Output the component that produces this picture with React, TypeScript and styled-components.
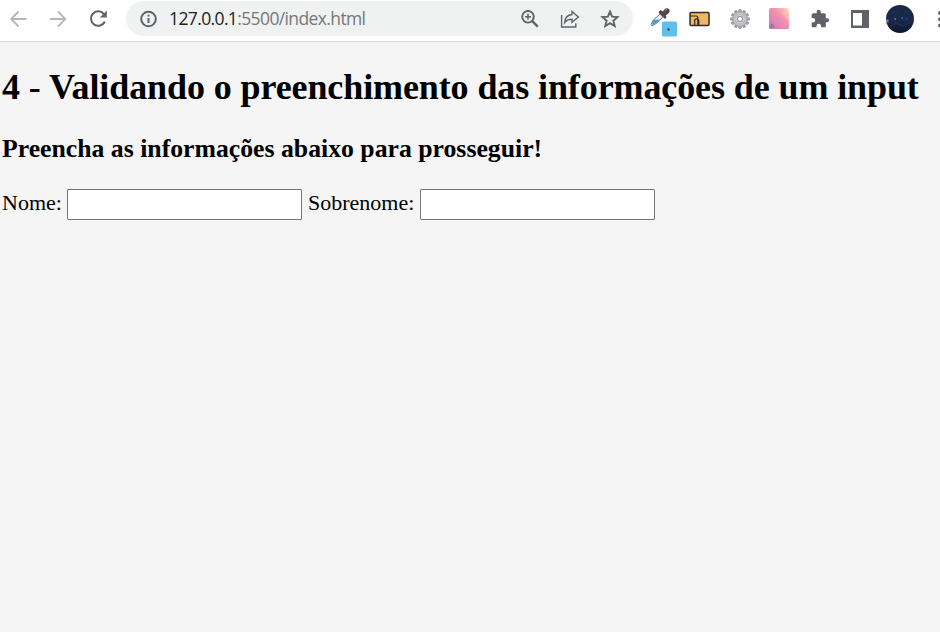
import React from "react";
import styled, { createGlobalStyle } from "styled-components";

const GlobalStyle = createGlobalStyle`
  * { box-sizing: border-box; }
  html, body, #root { height: 100%; }
  body { margin: 0; overflow: hidden; background: #f5f5f5; }
  svg { display: block; flex: none; overflow: visible; }
`;

const Window = styled.div`
  display: flex;
  flex-direction: column;
  width: 940px;
  height: 632px;
  overflow: hidden;
`;

const Toolbar = styled.header`
  display: flex;
  align-items: flex-start;
  flex: none;
  height: 42px;
  padding-top: 1px;
  background: #fff;
  border-bottom: 1px solid #dadbdc;
`;

const IconButton = styled.button<{ $width?: number; $color?: string }>`
  display: flex;
  align-items: center;
  justify-content: center;
  flex: none;
  width: ${(p) => p.$width ?? 40}px;
  height: 35px;
  padding: 0;
  border: 0;
  background: none;
  color: ${(p) => p.$color ?? "#5f6368"};
`;

const Navigation = styled.nav`
  display: flex;
  flex: none;
  width: 120px;
  margin-left: -2px;
  margin-right: 8px;
`;

const AddressBar = styled.div`
  display: flex;
  align-items: center;
  flex: none;
  width: 507px;
  height: 35px;
  padding: 0 3px 0 12px;
  border-radius: 18px;
  background: #f0f2f2;
  color: #5f6368;
`;

const Address = styled.span`
  flex: 1;
  margin-left: 11px;
  padding-bottom: 1px;
  font: 400 17.5px/24px "Open Sans", "Noto Sans", sans-serif;
  letter-spacing: -0.62px;
  color: #74777a;
  white-space: nowrap;
`;

const Host = styled.span`
  color: #202124;
`;

const Extensions = styled.div`
  display: flex;
  flex: none;
  margin-left: 7px;
`;

const Page = styled.main`
  flex: 1;
  padding: 0 2px;
  background: #f5f5f5;
  color: #000;
  font: 22px/25px "Liberation Serif", "Times New Roman", serif;
`;

const Title = styled.h1`
  margin: 25px 0 0;
  font-size: 36px;
  line-height: 41px;
  letter-spacing: -0.1px;
  white-space: nowrap;
`;

const Subtitle = styled.h3`
  margin: 26px 0 0;
  font-size: 25.74px;
  line-height: 29px;
  white-space: nowrap;
`;

const Form = styled.form`
  display: flex;
  margin-top: 26px;
`;

const Label = styled.label<{ $width: number }>`
  flex: none;
  width: ${(p) => p.$width}px;
  padding-top: 1px;
  white-space: nowrap;
`;

const TextInput = styled.input`
  width: 235px;
  height: 31px;
  margin: 0 6px 0 0;
  padding: 1px 3px;
  border: 1px solid #767676;
  border-radius: 1px;
  background: #fff;
  font: 18px "Liberation Sans", Arial, sans-serif;
`;

const ArrowIcon = ({ forward = false }: { forward?: boolean }) => (
  <svg width="18" height="18" viewBox="0 0 18 18" fill="none" stroke="currentColor" strokeWidth="1.8">
    <path d={forward ? "M1 9H16M9 1.5L16.3 9L9 16.5" : "M17.5 9H2.5M9.5 1.5L2.2 9L9.5 16.5"} />
  </svg>
);

const ReloadIcon = () => (
  <svg width="20" height="20" viewBox="0 0 20 20">
    <path d="M16.8 12.5A7.2 7.2 0 1 1 15.8 5" fill="none" stroke="currentColor" strokeWidth="2" />
    <path d="M18.8 1.5V8.5H11.8Z" fill="currentColor" />
  </svg>
);

const InfoIcon = () => (
  <svg width="20" height="20" viewBox="0 0 20 20">
    <circle cx="10.5" cy="10" r="7.3" fill="none" stroke="currentColor" strokeWidth="2" />
    <path d="M9.5 9H11.5V14H9.5ZM9.5 5.8H11.5V7.6H9.5Z" fill="currentColor" />
  </svg>
);

const ZoomIcon = () => (
  <svg width="20" height="20" viewBox="0 0 20 20" fill="none" stroke="currentColor">
    <circle cx="8" cy="7.8" r="5.8" strokeWidth="1.9" />
    <path d="M8 4.8V10.8M5 7.8H11" strokeWidth="1.6" />
    <path d="M12.3 12.1L17.8 17.6" strokeWidth="2.4" />
  </svg>
);

const ShareIcon = () => (
  <svg width="20" height="20" viewBox="0 0 20 20" fill="none" stroke="currentColor" strokeWidth="1.4">
    <path d="M1.6 6V18H15.8V14.3" />
    <path d="M12 2.5L18.4 8L12 13.3V10.3C8.3 10.2 6.3 11.2 4.7 13.5C5 8.9 7.7 5.9 12 5.5Z" />
  </svg>
);

const StarIcon = () => (
  <svg width="20" height="20" viewBox="0 0 20 20" fill="none" stroke="currentColor" strokeWidth="1.9">
    <path d="M10 2.7L12.1 7.7L17.5 8.1L13.4 11.7L14.7 17L10 14.2L5.3 17L6.6 11.7L2.5 8.1L7.9 7.7Z" />
  </svg>
);

const EyedropperIcon = () => (
  <svg width="30" height="30" viewBox="0 0 30 30">
    <path d="M6 20.5L8.3 16L16 9L19 12L11.5 19.3L7 21.8Z" fill="#dceaf4" stroke="#77757b" />
    <path d="M6.8 21L8.8 15.7H14.8L11.2 19Z" fill="#38a0e0" />
    <path d="M14.2 7.2L15.5 6L17.8 7.6L20 4.8Q22.5 3.6 24.3 5.2Q25.4 7.2 23.8 9.2L20.7 11.4L21.6 13L20 15L13.5 8.7Z" fill="#544549" />
    <path d="M20 6.5L22.2 5.3" stroke="#9a8d91" />
    <rect x="17" y="17.5" width="15" height="15" rx="1.5" fill="#5fbfeb" />
    <rect x="22.5" y="24.5" width="2" height="2" fill="#163445" />
  </svg>
);

const FolderIcon = () => (
  <svg width="22" height="16" viewBox="0 0 22 16">
    <rect x="1" y="1.5" width="19" height="13" rx="1" fill="#ebb95f" stroke="#3b2635" strokeWidth="1.5" />
    <path d="M1 5H7Q8.8 5 8.8 7V14.5M5.7 14.5V10Q5.7 7.8 7.5 7.8Q9.8 7.8 9.8 10V14.5" fill="none" stroke="#3b2635" strokeWidth="1.2" />
  </svg>
);

const gearTeeth = Array.from({ length: 12 }, (_, i) => i * 30);

const GearIcon = () => (
  <svg width="20" height="20" viewBox="0 0 20 20">
    {gearTeeth.map((angle) => (
      <rect key={angle} x="8.7" y="0.5" width="2.6" height="4" rx=".6" fill="#a5a5aa" stroke="#7c7c82" strokeWidth=".5" transform={`rotate(${angle} 10 10)`} />
    ))}
    <circle cx="10" cy="10" r="7.3" fill="#c4c4c8" stroke="#919196" strokeWidth=".7" />
    <circle cx="10" cy="10" r="5" fill="#cdcdd0" stroke="#b6b6ba" strokeWidth=".8" />
    <path d="M6.4 6.4L13.6 13.6M13.6 6.4L6.4 13.6" stroke="#a6a6aa" strokeWidth=".8" />
    <circle cx="10" cy="10" r="2.5" fill="#fff" stroke="#8a8a8f" strokeWidth="1" />
  </svg>
);

const GradientIcon = () => (
  <svg width="20" height="21" viewBox="0 0 20 21">
    <defs>
      <linearGradient id="tile" x1="0" y1="1" x2="1" y2="0">
        <stop offset="0" stopColor="#bf78b5" />
        <stop offset=".3" stopColor="#dc82b7" />
        <stop offset=".6" stopColor="#f493ae" />
        <stop offset=".83" stopColor="#f9b7ad" />
        <stop offset="1" stopColor="#f3f6c9" />
      </linearGradient>
    </defs>
    <rect width="20" height="21" rx="1.5" fill="url(#tile)" />
    <path d="M4 9L20 16V20H9L0 9" fill="#ee8eb5" opacity=".3" />
    <path d="M13 4L20 13V3Z" fill="#ffd0b5" opacity=".45" />
    <circle cx="3" cy="18" r="2.2" fill="#8d8398" />
  </svg>
);

const PuzzleIcon = () => (
  <svg width="20" height="20" viewBox="0 0 24 24" fill="currentColor">
    <path d="M20.5 11H19V7c0-1.1-.9-2-2-2h-4V3.5a2.5 2.5 0 0 0-5 0V5H4c-1.1 0-2 .9-2 2v3.8h1.5a2.7 2.7 0 0 1 0 5.4H2V20c0 1.1.9 2 2 2h3.8v-1.5a2.7 2.7 0 0 1 5.4 0V22H17c1.1 0 2-.9 2-2v-4h1.5a2.5 2.5 0 0 0 0-5Z" />
  </svg>
);

const PanelIcon = () => (
  <svg width="18" height="18" viewBox="0 0 18 18">
    <path fillRule="evenodd" d="M0 0H18V18H0ZM2 3V15.5H11V3Z" fill="currentColor" />
  </svg>
);

const AvatarIcon = () => (
  <svg width="28" height="28" viewBox="0 0 28 28">
    <defs>
      <clipPath id="round"><circle cx="14" cy="14" r="14" /></clipPath>
      <linearGradient id="night" x2="0" y2="1">
        <stop stopColor="#172744" />
        <stop offset=".55" stopColor="#19294a" />
        <stop offset="1" stopColor="#0d172d" />
      </linearGradient>
    </defs>
    <g clipPath="url(#round)">
      <rect width="28" height="28" fill="url(#night)" />
      <path d="M3 10L9 6L12 8M18 4L23 8M5 21L11 18L16 21L24 18" stroke="#20345a" fill="none" />
      <path d="M0 16H2.5" stroke="#8c8980" strokeWidth="3" />
      <path d="M8.5 14H10" stroke="#8c8980" strokeWidth="1.4" />
      <path d="M15.5 13H17" stroke="#2867bc" strokeWidth="2" />
      <path d="M20 14H21.5" stroke="#435b78" />
    </g>
  </svg>
);

const MenuIcon = () => (
  <svg width="4" height="18" viewBox="0 0 4 18" fill="currentColor">
    <circle cx="2" cy="3" r="2" /><circle cx="2" cy="9.3" r="2" /><circle cx="2" cy="15.6" r="2" />
  </svg>
);

export default function App() {
  return (
    <Window>
      <GlobalStyle />
      <Toolbar>
        <Navigation>
          <IconButton $color="#b9b5ba" aria-label="Voltar"><ArrowIcon /></IconButton>
          <IconButton $color="#b9b5ba" aria-label="Avançar"><ArrowIcon forward /></IconButton>
          <IconButton aria-label="Recarregar"><ReloadIcon /></IconButton>
        </Navigation>
        <AddressBar>
          <InfoIcon />
          <Address><Host>127.0.0.1</Host>:5500/index.html</Address>
          <IconButton aria-label="Zoom"><ZoomIcon /></IconButton>
          <IconButton aria-label="Compartilhar"><ShareIcon /></IconButton>
          <IconButton aria-label="Favoritos"><StarIcon /></IconButton>
        </AddressBar>
        <Extensions>
          <IconButton aria-label="Conta-gotas"><EyedropperIcon /></IconButton>
          <IconButton aria-label="Pasta"><FolderIcon /></IconButton>
          <IconButton $width={39} aria-label="Configurações"><GearIcon /></IconButton>
          <IconButton aria-label="Cores"><GradientIcon /></IconButton>
          <IconButton $width={41} aria-label="Extensões"><PuzzleIcon /></IconButton>
          <IconButton aria-label="Painel lateral"><PanelIcon /></IconButton>
          <IconButton aria-label="Perfil"><AvatarIcon /></IconButton>
          <IconButton aria-label="Menu"><MenuIcon /></IconButton>
        </Extensions>
      </Toolbar>
      <Page>
        <Title>4 - Validando o preenchimento das informações de um input</Title>
        <Subtitle>Preencha as informações abaixo para prosseguir!</Subtitle>
        <Form>
          <Label htmlFor="nome" $width={65}>Nome:</Label>
          <TextInput id="nome" />
          <Label htmlFor="sobrenome" $width={112}>Sobrenome:</Label>
          <TextInput id="sobrenome" />
        </Form>
      </Page>
    </Window>
  );
}
